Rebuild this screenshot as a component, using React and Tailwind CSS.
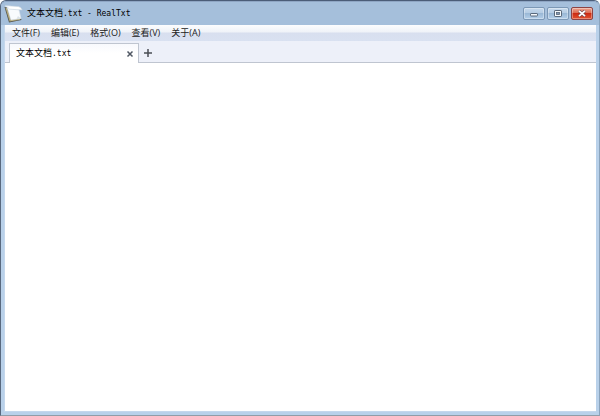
import React from "react";

const menus = ["文件(F)", "编辑(E)", "格式(O)", "查看(V)", "关于(A)"];

function AppIcon() {
  return (
    <svg width="20" height="20" viewBox="0 0 20 20" aria-hidden="true">
      <path d="M.5 3 3 3 6.5 15.5 17 14.5 17.5 16 5 18.6Z" fill="#55564e" />
      <path d="M1.5 4 3 4 6.8 15.5 16 14.8 16 15.8 5.6 17.6Z" fill="#b5ab7c" />
      <path d="M3 3 14.5 4 17 14.6 7 16Z" fill="#f8fbfd" stroke="#dbe3ea" strokeWidth=".6" />
      <path d="M1.2 1.6 14.5 2.6Q17 3 18.3 6L5.6 5.2Q4 2.6 1.2 2.8Z" fill="#fff" stroke="#c3d0dc" strokeWidth=".6" />
      <path d="M14 12 16.8 14.6 12.5 15Z" fill="#d9e2e8" />
    </svg>
  );
}

function WindowButton({ label, close, children }) {
  const tone = close
    ? "border-[#8d4444] bg-[linear-gradient(#eba592,#dd6a50_45%,#cc2c14_50%,#e2532f)]"
    : "border-[#7c98b6] bg-[linear-gradient(#c6d9ec,#b5cce4_45%,#9ab8d6_50%,#b4cfe9)]";
  return (
    <button
      type="button"
      aria-label={label}
      className={`flex h-[13px] w-[22px] items-center justify-center rounded-xs border shadow-[inset_0_0_0_1px_#ffffff55] ${tone}`}
    >
      {children}
    </button>
  );
}

function FileName() {
  return (
    <>
      <span className="text-[9px]">文本文档</span>
      <span>.txt</span>
    </>
  );
}

export default function App() {
  return (
    <div className="flex h-screen flex-col overflow-hidden rounded-t-md border border-t-[#4b5d78] border-r-[#8ba4bd] border-b-[#909da8] border-l-[#59697f] bg-[#b9d1ea] text-black">
      <header className="flex h-6 shrink-0 items-center justify-between rounded-t-[5px] border-t border-[#8fa6c4] bg-[#a5bfdb] pr-1.5 pl-[3px]">
        <div className="flex items-center gap-[3px]">
          <AppIcon />
          <h1 className="font-['DejaVu_Sans_Mono','Noto_Sans_CJK_SC',monospace] text-[8px] leading-3 whitespace-pre">
            <FileName /> - RealTxt
          </h1>
        </div>
        <div className="flex gap-[2px]">
          <WindowButton label="最小化">
            <svg width="10" height="7" viewBox="0 0 10 7">
              <rect x="1.5" y="3.5" width="7" height="2.5" rx=".6" fill="#f5f8fb" stroke="#59687a" />
            </svg>
          </WindowButton>
          <WindowButton label="最大化">
            <svg width="10" height="7" viewBox="0 0 10 7">
              <rect x="1.5" y=".5" width="7" height="6" rx=".6" fill="#f5f8fb" stroke="#59687a" />
              <rect x="3.5" y="2.5" width="3" height="2" fill="#8098b3" stroke="#59687a" strokeWidth=".8" />
            </svg>
          </WindowButton>
          <WindowButton label="关闭" close>
            <svg width="10" height="7" viewBox="0 0 10 7">
              <path d="M2 .8 8 6.2M8 .8 2 6.2" stroke="#74494a" strokeWidth="3" />
              <path d="M2 .8 8 6.2M8 .8 2 6.2" stroke="#fff" strokeWidth="1.8" />
            </svg>
          </WindowButton>
        </div>
      </header>

      <div className="mx-[3px] mb-[3px] flex min-h-0 flex-1 flex-col border border-t-0 border-r-0 border-[#c4d7ec] bg-white">
        <nav className="flex h-4 shrink-0 items-center gap-[11px] bg-[linear-gradient(#fcfdfe,#eff2f8_7px,#d8dfef_8px,#d9e1f1)] px-[7px]">
          {menus.map((m) => (
            <button
              key={m}
              type="button"
              className="font-['Open_Sans','Noto_Sans_CJK_SC',sans-serif] text-[9px] leading-3 whitespace-nowrap text-[#1a1a1a]"
            >
              {m}
            </button>
          ))}
        </nav>
        <div className="flex h-[22px] shrink-0 items-end border-b border-[#bfc5d0] bg-[#edf0f9] pl-1">
          <div className="-mb-px flex h-5 w-[130px] items-center justify-between border border-b-0 border-[#bfc5d0] bg-linear-to-b from-[#f8f9fd] to-white to-50% pr-1 pl-1.5">
            <button
              type="button"
              className="font-['DejaVu_Sans_Mono','Noto_Sans_CJK_SC',monospace] text-[8px] leading-3 whitespace-pre"
            >
              <FileName />
            </button>
            <button type="button" aria-label="关闭标签">
              <svg width="8" height="8" viewBox="0 0 8 8">
                <path d="M1.5 1.5 6.5 6.5M6.5 1.5 1.5 6.5" stroke="#4f5763" strokeWidth="1.5" />
              </svg>
            </button>
          </div>
          <button type="button" aria-label="新建标签" className="mb-1 ml-1">
            <svg width="10" height="10" viewBox="0 0 10 10">
              <path d="M5 1V9M1 5H9" stroke="#4a4d54" strokeWidth="1.5" />
            </svg>
          </button>
        </div>
        <textarea
          aria-label="文本内容"
          className="min-h-0 w-full flex-1 resize-none bg-white p-1 font-['Liberation_Mono','Noto_Sans_CJK_SC',monospace] text-xs outline-none"
        />
      </div>
    </div>
  );
}
